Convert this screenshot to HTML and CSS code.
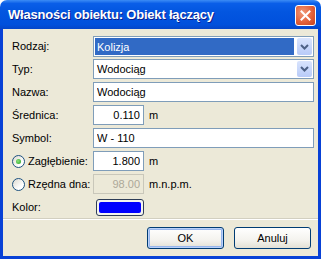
FILE: index.html
```html
<!DOCTYPE html>
<html lang="pl">
  <head>
    <meta charset="UTF-8" />
    <title>Własności obiektu</title>
    <link rel="stylesheet" href="styles.css">
  </head>
  <body>
    <div class="window">
      <div class="titlebar">
        <span class="title">Własności obiektu: Obiekt łączący</span>
        <span class="close">
          <svg width="11" height="11" viewBox="0 0 11 11">
            <path d="M1.5 1.5 L9.5 9.5 M9.5 1.5 L1.5 9.5" stroke="#fff" stroke-width="2" stroke-linecap="square" />
          </svg>
        </span>
      </div>
      <div class="client">
        <div class="form">
          <span class="lbl">Rodzaj:</span>
          <div class="combo wide-gap">
            <span class="combo-text selected">Kolizja</span>
            <span class="drop">
              <svg width="9" height="6" viewBox="0 0 9 6"><path d="M1 1 L4.5 4.5 L8 1" fill="none" stroke="#4d6185" stroke-width="2" /></svg>
            </span>
          </div>

          <span class="lbl">Typ:</span>
          <div class="combo">
            <span class="combo-text">Wodociąg</span>
            <span class="drop">
              <svg width="9" height="6" viewBox="0 0 9 6"><path d="M1 1 L4.5 4.5 L8 1" fill="none" stroke="#4d6185" stroke-width="2" /></svg>
            </span>
          </div>

          <span class="lbl">Nazwa:</span>
          <input class="field" type="text" value="Wodociąg" />

          <span class="lbl">Średnica:</span>
          <div class="inline">
            <input class="field short num" type="text" value="0.110" />
            <span class="unit">m</span>
          </div>

          <span class="lbl">Symbol:</span>
          <input class="field" type="text" value="W - 110" />

          <span class="lbl radio-lbl"><span class="radio checked"></span>Zagłębienie:</span>
          <div class="inline">
            <input class="field short num" type="text" value="1.800" />
            <span class="unit">m</span>
          </div>

          <span class="lbl radio-lbl"><span class="radio"></span>Rzędna dna:</span>
          <div class="inline">
            <input class="field short num" type="text" value="98.00" disabled />
            <span class="unit">m.n.p.m.</span>
          </div>

          <span class="lbl kolor-lbl">Kolor:</span>
          <div class="inline kolor-row">
            <span class="swatch"><span class="swatch-fill"></span></span>
          </div>
        </div>

        <div class="separator"></div>

        <div class="actions">
          <button class="btn default">OK</button>
          <button class="btn">Anuluj</button>
        </div>
      </div>
    </div>
  </body>
</html>
```

FILE: styles.css
```css
body {
  margin: 0;
  background-color: #fff;
  font-family: "Liberation Sans", Arial, sans-serif;
  font-size: 11px;
  color: #000;
}

.window {
  width: 321px;
}

.titlebar {
  height: 29px;
  box-sizing: border-box;
  display: flex;
  align-items: center;
  justify-content: space-between;
  padding: 0 5px 0 8px;
  border-radius: 7px 7px 0 0;
  background: linear-gradient(#3c8cf5 0%, #0a5ee8 12%, #0356e0 40%, #0050dc 85%, #0445c8 100%);
}

.title {
  color: #fff;
  font-weight: bold;
  font-size: 13px;
  font-family: "Liberation Sans", Arial, sans-serif;
  letter-spacing: -0.2px;
  text-shadow: 1px 1px 0 #0a1e8c;
}

.close {
  width: 19px;
  height: 19px;
  margin-top: 1px;
  display: flex;
  align-items: center;
  justify-content: center;
  border: 1px solid #fff;
  border-radius: 3px;
  background: radial-gradient(circle at 35% 35%, #f09a7a 0%, #e3613a 55%, #c4411c 100%);
}

.client {
  background-color: #ece9d8;
  border: 3px solid #0841d6;
  border-top: none;
}

.form {
  display: grid;
  grid-template-columns: 81px 1fr;
  grid-auto-rows: 20px;
  row-gap: 3px;
  align-items: center;
  padding: 7px 4px 0 9px;
}

.lbl {
  white-space: nowrap;
}

.radio-lbl {
  display: flex;
  align-items: center;
}

.radio {
  width: 11px;
  height: 11px;
  margin-right: 3px;
  border: 1px solid #1c5180;
  border-radius: 50%;
  background: linear-gradient(135deg, #dcd9cf, #fff 70%);
  position: relative;
}

.radio.checked::after {
  content: "";
  position: absolute;
  left: 3px;
  top: 3px;
  width: 5px;
  height: 5px;
  border-radius: 50%;
  background: radial-gradient(circle at 40% 40%, #8be27b, #21a121);
}

.combo {
  height: 20px;
  box-sizing: border-box;
  display: flex;
  align-items: center;
  border: 1px solid #7f9db9;
  background-color: #fff;
  padding: 1px;
}

.wide-gap {
  margin-bottom: 3px;
  align-self: start;
  height: 21px;
}

.combo-text {
  flex: 1;
  height: 100%;
  display: flex;
  align-items: center;
  padding-left: 2px;
}

.combo-text.selected {
  background-color: #316ac5;
  color: #fff;
  margin-right: 3px;
}

.drop {
  width: 15px;
  height: 100%;
  display: flex;
  align-items: center;
  justify-content: center;
  border-radius: 2px;
  background: linear-gradient(#d9e4fd, #b8cbf8);
}

.field {
  height: 20px;
  box-sizing: border-box;
  width: 100%;
  margin: 0;
  padding: 0 3px;
  border: 1px solid #7f9db9;
  background-color: #fff;
  font-family: "Liberation Sans", Arial, sans-serif;
  font-size: 11px;
  color: #000;
}

.field:disabled {
  background-color: #ece9d8;
  border-color: #c9c7ba;
  color: #aca899;
}

.inline {
  display: flex;
  align-items: center;
}

.short {
  width: 51px;
}

.num {
  text-align: right;
}

.unit {
  margin-left: 5px;
}

.kolor-row {
  height: 18px;
}

.swatch {
  margin-left: 3px;
  width: 48px;
  height: 17px;
  box-sizing: border-box;
  border: 1px solid #2e3d57;
  border-radius: 3px;
  padding: 2px;
  background-color: #f4f3ee;
  display: flex;
}

.swatch-fill {
  flex: 1;
  border-radius: 2px;
  background-color: #0000ff;
}

.separator {
  margin-top: 1px;
  height: 1px;
  background-color: #d2cfc0;
  border-bottom: 1px solid #fff;
}

.actions {
  display: flex;
  justify-content: flex-end;
  gap: 10px;
  padding: 7px 7px 7px 0;
}

.btn {
  width: 77px;
  height: 22px;
  margin: 0;
  padding: 0;
  border: 1px solid #003c74;
  border-radius: 3px;
  background: linear-gradient(#fff, #f4f3ee 60%, #e3e0d5);
  font-family: "Liberation Sans", Arial, sans-serif;
  font-size: 11px;
  color: #000;
}

.btn.default {
  box-shadow: inset 0 0 0 1px #b9d1fa, inset 0 0 0 2px #97b6ec;
}
```
